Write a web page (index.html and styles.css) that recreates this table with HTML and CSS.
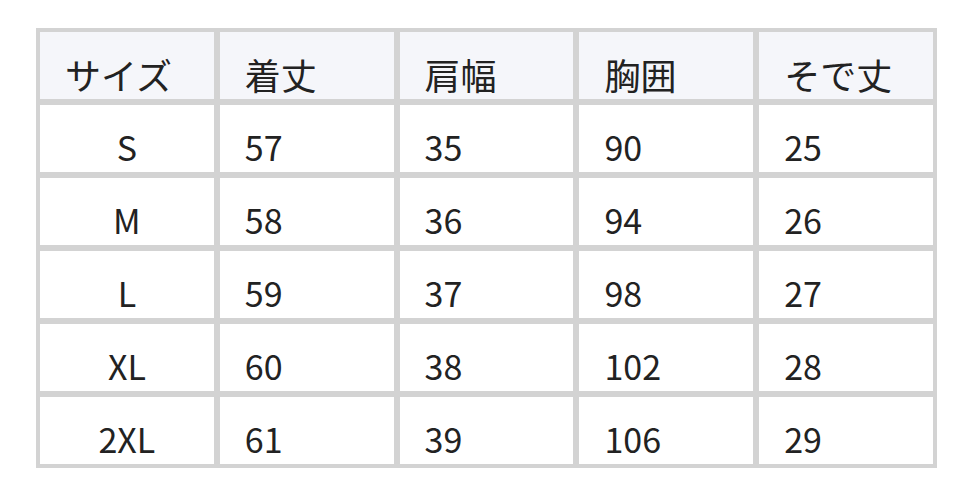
FILE: index.html
```html
<!DOCTYPE html>
<html lang="ja">
<head>
<meta charset="utf-8">
<title>サイズ表</title>
<link rel="stylesheet" href="styles.css">
</head>
<body>
<div class="size-table">
  <div class="cell head">サイズ</div>
  <div class="cell head">着丈</div>
  <div class="cell head">肩幅</div>
  <div class="cell head">胸囲</div>
  <div class="cell head">そで丈</div>

  <div class="cell size">S</div>
  <div class="cell">57</div>
  <div class="cell">35</div>
  <div class="cell">90</div>
  <div class="cell">25</div>

  <div class="cell size">M</div>
  <div class="cell">58</div>
  <div class="cell">36</div>
  <div class="cell">94</div>
  <div class="cell">26</div>

  <div class="cell size">L</div>
  <div class="cell">59</div>
  <div class="cell">37</div>
  <div class="cell">98</div>
  <div class="cell">27</div>

  <div class="cell size">XL</div>
  <div class="cell">60</div>
  <div class="cell">38</div>
  <div class="cell">102</div>
  <div class="cell">28</div>

  <div class="cell size">2XL</div>
  <div class="cell">61</div>
  <div class="cell">39</div>
  <div class="cell">106</div>
  <div class="cell">29</div>
</div>
</body>
</html>
```

FILE: styles.css
```css
html, body {
  margin: 0;
  padding: 0;
  background: #ffffff;
}

body {
  padding: 28px 0 0 36px;
  font-family: "Noto Sans CJK JP", "Noto Sans", sans-serif;
  color: #222222;
}

.size-table {
  width: 901px;
  box-sizing: border-box;
  display: grid;
  grid-template-columns: repeat(5, 1fr);
  grid-auto-rows: 67px;
  gap: 6px;
  padding: 4px;
  background: #d3d3d3;
}

.cell {
  background: #ffffff;
  display: flex;
  align-items: flex-end;
  padding: 0 0 8px 25px;
  font-size: 34px;
  line-height: 34px;
  box-sizing: border-box;
}

.cell.head {
  background: #f5f6fa;
  font-size: 36px;
  line-height: 36px;
  padding-bottom: 7px;
}

.cell.size {
  justify-content: center;
  padding-left: 0;
}
```
